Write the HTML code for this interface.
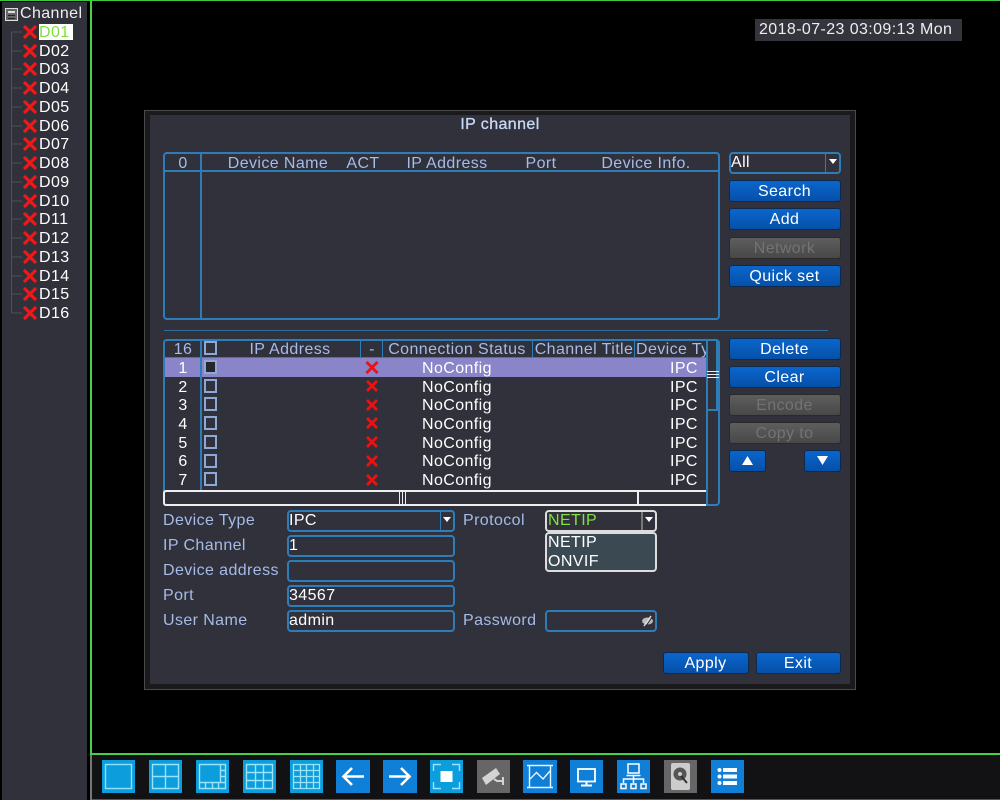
<!DOCTYPE html>
<html><head><meta charset="utf-8"><title>IP channel</title>
<style>
html,body{margin:0;padding:0;background:#000}
#r{position:relative;width:1000px;height:800px;overflow:hidden;background:#000;font-family:"Liberation Sans",sans-serif;font-size:16px;letter-spacing:.4px;color:#fff}
#r div,#r svg{position:absolute}
.t{white-space:nowrap;line-height:20px;height:20px;margin-top:1px}
.l{color:#a5bbe8}
.c{transform:translateX(-50%)}
.bx{box-sizing:border-box;border:2px solid #2f7db8;border-radius:4px}
.btn{box-sizing:border-box;left:729px;width:112px;height:22px;border:1px solid #0c2a50;border-radius:3px;background:linear-gradient(#0a66cc,#0650a8);text-align:center;line-height:22px;padding-right:1px;color:#fff}
.dis{background:linear-gradient(#5e5e5e,#484848);border-color:#2a2a2a;color:#737373}
.b{background:#2f7db8}
</style></head><body><div id="r">

<!-- sidebar -->
<div style="left:2px;top:2px;width:85px;height:798px;background:#30313a"></div>
<div style="left:0;top:0;width:1000px;height:1px;background:#3fc83f"></div>
<div style="left:90px;top:0;width:2px;height:755px;background:#46d046"></div>
<div style="left:90px;top:753px;width:910px;height:2px;background:#46d046"></div>
<div style="left:90px;top:755px;width:2px;height:45px;background:#777"></div>

<svg style="left:5px;top:8px" width="13" height="13" viewBox="0 0 13 13"><rect x=".5" y=".5" width="12" height="12" fill="#666" stroke="#ddd"/><rect x="3" y="3" width="7" height="2" fill="#ddd"/><rect x="3" y="7" width="7" height="1" fill="#222"/><rect x="3" y="10" width="7" height="1" fill="#222"/></svg>
<div class="t" style="left:20px;top:3px;color:#eee">Channel</div>

<svg style="left:10px;top:20px" width="28" height="304" viewBox="0 0 28 304">
<g transform="translate(0,8)">
<path d="M1.500 4V285M1.500 4H12M1.500 23H12M1.500 41H12M1.500 60H12M1.500 79H12M1.500 98H12M1.500 116H12M1.500 135H12M1.500 154H12M1.500 173H12M1.500 191H12M1.500 210H12M1.500 229H12M1.500 248H12M1.500 266H12M1.500 285H12" stroke="#505056" fill="none"/>
<g stroke="#f01818" stroke-width="3.200" fill="none"><path d="M14 -2L26 10M26 -2L14 10"/><path d="M14 17L26 29M26 17L14 29"/><path d="M14 35L26 47M26 35L14 47"/><path d="M14 54L26 66M26 54L14 66"/><path d="M14 73L26 85M26 73L14 85"/><path d="M14 92L26 104M26 92L14 104"/><path d="M14 110L26 122M26 110L14 122"/><path d="M14 129L26 141M26 129L14 141"/><path d="M14 148L26 160M26 148L14 160"/><path d="M14 167L26 179M26 167L14 179"/><path d="M14 185L26 197M26 185L14 197"/><path d="M14 204L26 216M26 204L14 216"/><path d="M14 223L26 235M26 223L14 235"/><path d="M14 242L26 254M26 242L14 254"/><path d="M14 260L26 272M26 260L14 272"/><path d="M14 279L26 291M26 279L14 291"/></g>
</g></svg>

<div style="left:39px;top:24px;width:34px;height:16px;background:#fff"></div>
<div class="t" style="left:39px;top:22px;color:#80e040">D01</div>
<div class="t" style="left:39px;top:41px">D02</div>
<div class="t" style="left:39px;top:59px">D03</div>
<div class="t" style="left:39px;top:78px">D04</div>
<div class="t" style="left:39px;top:97px">D05</div>
<div class="t" style="left:39px;top:116px">D06</div>
<div class="t" style="left:39px;top:134px">D07</div>
<div class="t" style="left:39px;top:153px">D08</div>
<div class="t" style="left:39px;top:172px">D09</div>
<div class="t" style="left:39px;top:191px">D10</div>
<div class="t" style="left:39px;top:209px">D11</div>
<div class="t" style="left:39px;top:228px">D12</div>
<div class="t" style="left:39px;top:247px">D13</div>
<div class="t" style="left:39px;top:266px">D14</div>
<div class="t" style="left:39px;top:284px">D15</div>
<div class="t" style="left:39px;top:303px">D16</div>

<!-- clock -->
<div style="left:755px;top:19px;width:207px;height:22px;background:#33343c"></div>
<div class="t" style="left:759px;top:19px;color:#eee">2018-07-23 03:09:13 Mon</div>

<!-- dialog -->
<div style="left:144px;top:110px;width:712px;height:580px;background:#1a1a1c;box-shadow:inset 0 0 0 1px #4a4a4a"></div>
<div style="left:150px;top:115px;width:700px;height:569px;background:#30313a"></div>
<div class="t c" style="left:500px;top:114px;color:#c8d8f8;-webkit-text-stroke:.3px #c8d8f8">IP channel</div>

<!-- table 1 -->
<div class="bx" style="left:163px;top:152px;width:557px;height:168px"></div>
<div class="b" style="left:165px;top:170px;width:553px;height:2px"></div>
<div class="b" style="left:200px;top:154px;width:2px;height:164px"></div>
<div class="t c l" style="left:183px;top:153px">0</div>
<div class="t c l" style="left:278px;top:153px">Device Name</div>
<div class="t c l" style="left:363px;top:153px">ACT</div>
<div class="t c l" style="left:447px;top:153px">IP Address</div>
<div class="t c l" style="left:541px;top:153px">Port</div>
<div class="t c l" style="left:646px;top:153px">Device Info.</div>

<div class="bx" style="left:729px;top:152px;width:112px;height:22px"></div>
<div class="b" style="left:825px;top:154px;width:1px;height:18px"></div>
<svg style="left:829px;top:159px" width="8" height="6"><path d="M0 0H8L4 5Z" fill="#fff"/></svg>
<div class="t" style="left:731px;top:152px">All</div>
<div class="btn" style="top:180px">Search</div>
<div class="btn" style="top:208px">Add</div>
<div class="btn dis" style="top:237px">Network</div>
<div class="btn" style="top:265px">Quick set</div>

<div style="left:164px;top:330px;width:664px;height:1px;background:#2f6c98"></div>

<!-- table 2 -->
<div class="bx" style="left:163px;top:339px;width:557px;height:167px"></div>
<div class="b" style="left:165px;top:357px;width:541px;height:1px"></div>
<div style="left:165px;top:358px;width:541px;height:19px;background:#8a84c8"></div>
<div class="b" style="left:200px;top:341px;width:2px;height:150px"></div>
<div class="b" style="left:360px;top:341px;width:1px;height:16px"></div>
<div class="b" style="left:382px;top:341px;width:1px;height:16px"></div>
<div class="b" style="left:532px;top:341px;width:1px;height:16px"></div>
<div class="b" style="left:634px;top:341px;width:1px;height:16px"></div>
<div class="t c l" style="left:183px;top:339px">16</div>
<div class="t c l" style="left:290px;top:339px">IP Address</div>
<div class="t c l" style="left:372px;top:339px">-</div>
<div class="t c l" style="left:457px;top:339px">Connection Status</div>
<div class="t c l" style="left:584px;top:339px">Channel Title</div>
<div style="left:636px;top:339px;width:70px;height:22px;overflow:hidden"><div class="t l" style="left:0;top:0">Device Type</div></div>

<svg style="left:204px;top:341px" width="13" height="146" viewBox="0 0 13 146" fill="none" stroke="#8fa9d6" stroke-width="2"><rect x="1" y="1" width="11" height="12"/><rect x="1" y="20" width="11" height="12" fill="#26262c"/><rect x="1" y="39" width="11" height="12"/><rect x="1" y="57" width="11" height="12"/><rect x="1" y="76" width="11" height="12"/><rect x="1" y="95" width="11" height="12"/><rect x="1" y="114" width="11" height="12"/><rect x="1" y="132" width="11" height="12"/></svg>
<svg style="left:365px;top:361px" width="14" height="127" viewBox="0 0 14 127" fill="none" stroke="#f01010" stroke-width="2.800"><path d="M1.500 1L12.500 12M12.500 1L1.500 12"/><path d="M2 20L12 30M12 20L2 30"/><path d="M2 39L12 49M12 39L2 49"/><path d="M2 57L12 67M12 57L2 67"/><path d="M2 76L12 86M12 76L2 86"/><path d="M2 95L12 105M12 95L2 105"/><path d="M2 114L12 124M12 114L2 124"/></svg>

<div class="t c" style="left:183px;top:358px">1</div><div class="t" style="left:422px;top:358px">NoConfig</div><div class="t" style="left:670px;top:358px">IPC</div>
<div class="t c" style="left:183px;top:377px">2</div><div class="t" style="left:422px;top:377px">NoConfig</div><div class="t" style="left:670px;top:377px">IPC</div>
<div class="t c" style="left:183px;top:395px">3</div><div class="t" style="left:422px;top:395px">NoConfig</div><div class="t" style="left:670px;top:395px">IPC</div>
<div class="t c" style="left:183px;top:414px">4</div><div class="t" style="left:422px;top:414px">NoConfig</div><div class="t" style="left:670px;top:414px">IPC</div>
<div class="t c" style="left:183px;top:433px">5</div><div class="t" style="left:422px;top:433px">NoConfig</div><div class="t" style="left:670px;top:433px">IPC</div>
<div class="t c" style="left:183px;top:451px">6</div><div class="t" style="left:422px;top:451px">NoConfig</div><div class="t" style="left:670px;top:451px">IPC</div>
<div class="t c" style="left:183px;top:470px">7</div><div class="t" style="left:422px;top:470px">NoConfig</div><div class="t" style="left:670px;top:470px">IPC</div>

<!-- scrollbars -->
<div style="left:163px;top:490px;width:543px;height:16px;box-sizing:border-box;border:2px solid #eee;border-right:0;border-radius:3px 0 0 3px;background:#30313a"></div>
<div style="left:637px;top:490px;width:2px;height:14px;background:#eee"></div>
<svg style="left:398px;top:492px" width="10" height="12"><path d="M1.500 0V12M4.500 0V12M7.500 0V12" stroke="#eee"/></svg>
<div class="b" style="left:706px;top:341px;width:2px;height:163px"></div>
<div class="b" style="left:716px;top:341px;width:2px;height:69px"></div>
<div class="b" style="left:706px;top:409px;width:12px;height:2px"></div>
<svg style="left:707px;top:370px" width="12" height="10"><path d="M0 1.500H12M0 4.500H12M0 7.500H12" stroke="#eee"/></svg>

<div class="btn" style="top:338px">Delete</div>
<div class="btn" style="top:366px">Clear</div>
<div class="btn dis" style="top:394px">Encode</div>
<div class="btn dis" style="top:422px">Copy to</div>
<div class="btn" style="top:450px;width:37px"></div>
<div class="btn" style="top:450px;left:804px;width:37px"></div>
<svg style="left:742px;top:456px" width="11" height="10"><path d="M5.500 0L11 9H0Z" fill="#fff"/></svg>
<svg style="left:817px;top:456px" width="11" height="10"><path d="M0 0H11L5.500 9Z" fill="#fff"/></svg>

<!-- form -->
<div class="t l" style="left:163px;top:510px">Device Type</div>
<div class="t l" style="left:163px;top:535px">IP Channel</div>
<div class="t l" style="left:163px;top:560px">Device address</div>
<div class="t l" style="left:163px;top:585px">Port</div>
<div class="t l" style="left:163px;top:610px">User Name</div>
<div class="t l" style="left:463px;top:510px">Protocol</div>
<div class="t l" style="left:463px;top:610px">Password</div>

<div class="bx" style="left:287px;top:510px;width:168px;height:22px"></div>
<div class="b" style="left:440px;top:512px;width:1px;height:18px"></div>
<svg style="left:443px;top:517px" width="8" height="6"><path d="M0 0H8L4 5Z" fill="#fff"/></svg>
<div class="t" style="left:289px;top:510px">IPC</div>
<div class="bx" style="left:287px;top:535px;width:168px;height:22px"></div>
<div class="t" style="left:289px;top:535px">1</div>
<div class="bx" style="left:287px;top:560px;width:168px;height:22px"></div>
<div class="bx" style="left:287px;top:585px;width:168px;height:22px"></div>
<div class="t" style="left:289px;top:585px">34567</div>
<div class="bx" style="left:287px;top:610px;width:168px;height:22px"></div>
<div class="t" style="left:289px;top:610px">admin</div>

<div class="bx" style="left:545px;top:510px;width:112px;height:22px;border-color:#ddd"></div>
<div style="left:641px;top:512px;width:2px;height:18px;background:#777"></div>
<svg style="left:645px;top:517px" width="8" height="6"><path d="M0 0H8L4 5Z" fill="#fff"/></svg>
<div class="t" style="left:548px;top:510px;color:#80e040">NETIP</div>
<div class="bx" style="left:545px;top:532px;width:112px;height:40px;border-color:#ddd;background:#3b4a52"></div>
<div class="t" style="left:548px;top:532px">NETIP</div>
<div class="t" style="left:548px;top:551px">ONVIF</div>
<div class="bx" style="left:545px;top:610px;width:112px;height:22px"></div>
<svg style="left:641px;top:614px" width="13" height="13" viewBox="0 0 13 13"><ellipse cx="6.500" cy="7" rx="5.500" ry="3.500" fill="#bbb"/><path d="M3 12L10 2" stroke="#ddd" stroke-width="1.500"/><path d="M5 12L12 2" stroke="#30313a" stroke-width="1"/></svg>

<div class="btn" style="left:663px;top:652px;width:86px">Apply</div>
<div class="btn" style="left:756px;top:652px;width:85px">Exit</div>

<!-- toolbar -->
<div style="left:92px;top:755px;width:908px;height:45px;background:#121214"></div>
<div style="left:92px;top:799px;width:908px;height:1px;background:#555"></div>

<svg style="left:102px;top:760px" width="33" height="33" viewBox="0 0 33 33"><rect width="33" height="33" fill="#0c9ddc"/><rect x="3.500" y="4.500" width="26" height="24" fill="none" stroke="#8fe0f8" stroke-width="1.400"/></svg>
<svg style="left:149px;top:760px" width="33" height="33" viewBox="0 0 33 33"><rect width="33" height="33" fill="#0c9ddc"/><path d="M3.500 4.500H29.500V28.500H3.500ZM16.500 4.500V28.500M3.500 16.500H29.500" fill="none" stroke="#9ae4fa" stroke-width="1.400"/></svg>
<svg style="left:196px;top:760px" width="33" height="33" viewBox="0 0 33 33"><rect width="33" height="33" fill="#0c9ddc"/><path d="M3.500 4.500H29.500V28.500H3.500ZM24.500 4.500V22.500M3.500 22.500H29.500M24.500 10.500H29.500M24.500 16.500H29.500M9.500 22.500V28.500M16.500 22.500V28.500M22.500 22.500V28.500" fill="none" stroke="#9ae4fa" stroke-width="1.400"/></svg>
<svg style="left:243px;top:760px" width="33" height="33" viewBox="0 0 33 33"><rect width="33" height="33" fill="#0c9ddc"/><path d="M3.500 4.500H29.500V28.500H3.500ZM12.500 4.500V28.500M20.500 4.500V28.500M3.500 12.500H29.500M3.500 20.500H29.500" fill="none" stroke="#9ae4fa" stroke-width="1.400"/></svg>
<svg style="left:290px;top:760px" width="33" height="33" viewBox="0 0 33 33"><rect width="33" height="33" fill="#0c9ddc"/><path d="M3.500 4.500H29.500V28.500H3.500ZM10.500 4.500V28.500M16.500 4.500V28.500M23.500 4.500V28.500M3.500 10.500H29.500M3.500 16.500H29.500M3.500 22.500H29.500" fill="none" stroke="#9ae4fa" stroke-width="1.300"/></svg>
<svg style="left:336px;top:760px" width="34" height="33" viewBox="0 0 34 33"><rect width="34" height="33" fill="#0f7fd8"/><path d="M28 16.500H8M16 8L7.500 16.500L16 25" fill="none" stroke="#fff" stroke-width="2.600"/></svg>
<svg style="left:383px;top:760px" width="34" height="33" viewBox="0 0 34 33"><rect width="34" height="33" fill="#0f7fd8"/><path d="M6 16.500H26M18 8L26.500 16.500L18 25" fill="none" stroke="#fff" stroke-width="2.600"/></svg>
<svg style="left:430px;top:760px" width="33" height="33" viewBox="0 0 33 33"><rect width="33" height="33" fill="#0c9ddc"/><path d="M3.500 11V4.500H11M22 4.500H29.500V11M29.500 22V28.500H22M11 28.500H3.500V22" fill="none" stroke="#9ae4fa" stroke-width="1.400"/><rect x="10.500" y="11" width="12" height="11" fill="#fff"/></svg>
<svg style="left:477px;top:760px" width="33" height="33" viewBox="0 0 33 33"><rect width="33" height="33" fill="#666"/><path d="M5 18L19 8L23 14L9 25Z" fill="#d4d4d4"/><path d="M17 19L20 21H26M26 17V25" fill="none" stroke="#d4d4d4" stroke-width="2"/></svg>
<svg style="left:523px;top:760px" width="34" height="33" viewBox="0 0 34 33"><rect width="34" height="33" fill="#0f7fd8"/><path d="M4 5.500H30M6.500 5.500V27.500M27.500 5.500V27.500M4 27.500H30M7 19L13.500 12.500L20 19L27 11" fill="none" stroke="#eaf6ff" stroke-width="1.400"/></svg>
<svg style="left:570px;top:760px" width="33" height="33" viewBox="0 0 33 33"><rect width="33" height="33" fill="#0f7fd8"/><rect x="8" y="9" width="17" height="12.500" fill="none" stroke="#fff" stroke-width="1.800"/><path d="M16.500 22V25M11 25.500H22" stroke="#fff" stroke-width="2"/></svg>
<svg style="left:617px;top:760px" width="33" height="33" viewBox="0 0 33 33"><rect width="33" height="33" fill="#0f7fd8"/><g fill="none" stroke="#fff" stroke-width="1.500"><rect x="11" y="4" width="11" height="9"/><path d="M9.500 15.500H23.500M16.500 15.500V23M6.500 23V19H26.500V23"/><rect x="4" y="24" width="5" height="4.500"/><rect x="14" y="24" width="5" height="4.500"/><rect x="24" y="24" width="5" height="4.500"/></g></svg>
<svg style="left:664px;top:760px" width="33" height="33" viewBox="0 0 33 33"><rect width="33" height="33" fill="#666"/><rect x="7" y="3" width="19" height="27" rx="2" fill="#ccc"/><circle cx="16" cy="14" r="6.500" fill="#555"/><circle cx="16" cy="14" r="2" fill="#ccc"/><path d="M17 16L23 23" stroke="#333" stroke-width="2"/></svg>
<svg style="left:711px;top:760px" width="33" height="33" viewBox="0 0 33 33"><rect width="33" height="33" fill="#0f7fd8"/><g fill="#fff"><circle cx="8.500" cy="10" r="2"/><circle cx="8.500" cy="16.500" r="2"/><circle cx="8.500" cy="23" r="2"/><rect x="12" y="8" width="14" height="4"/><rect x="12" y="14.500" width="14" height="4"/><rect x="12" y="21" width="14" height="4"/></g></svg>

</div></body></html>
